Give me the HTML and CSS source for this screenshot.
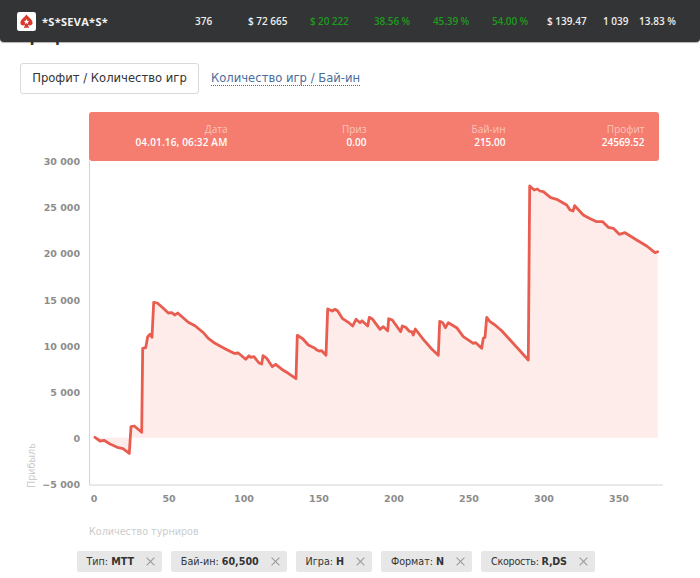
FILE: index.html
```html
<!DOCTYPE html>
<html lang="ru">
<head>
<meta charset="utf-8">
<title>График</title>
<link rel="stylesheet" href="styles.css">
</head>
<body>
<header class="topbar">
  <div class="player">
    <svg class="logo" viewBox="0 0 20 20" width="19" height="19" aria-hidden="true">
      <rect width="20" height="20" rx="2.5" fill="#fff"/>
      <path d="M10 2.6C8 5.6 3.6 7.6 3.6 11.6c0 2.4 2.9 3.4 4.9 1.9-.2 1.2-.8 2-1.5 3h6c-.7-1-1.3-1.8-1.5-3 2 1.5 4.9.5 4.9-1.9 0-4-4.4-6-6.400-9z" fill="#d93a2e"/>
      <path d="M10 7.400l.8 1.900 2 .2-1.500 1.300.5 2-1.800-1.100-1.800 1.100.5-2-1.500-1.300 2-.2z" fill="#fff"/>
    </svg>
    <span class="name">*S*SEVA*S*</span>
  </div>
  <span class="stat">376</span>
  <span class="stat">$ 72 665</span>
  <span class="stat good">$ 20 222</span>
  <span class="stat good">38.56 %</span>
  <span class="stat good">45.39 %</span>
  <span class="stat good">54.00 %</span>
  <span class="stat">$ 139.47</span>
  <span class="stat">1 039</span>
  <span class="stat">13.83 %</span>
</header>
<main>
  <h1 class="title">График</h1>
  <nav class="tabs">
    <button class="tab" type="button">Профит / Количество игр</button>
    <a class="tab-link" href="#">Количество игр / Бай-ин</a>
  </nav>
  <section class="chart">
    <div class="tip">
      <div class="tip-col"><span class="tip-label">Дата</span><strong class="tip-value">04.01.16, 06:32 AM</strong></div>
      <div class="tip-col"><span class="tip-label">Приз</span><strong class="tip-value">0.00</strong></div>
      <div class="tip-col"><span class="tip-label">Бай-ин</span><strong class="tip-value">215.00</strong></div>
      <div class="tip-col"><span class="tip-label">Профит</span><strong class="tip-value">24569.52</strong></div>
    </div>
    <svg class="plot" viewBox="0 100 700 440" width="700" height="440">
      <path class="area" d="M95 437.3L100 441 104 440.3 110 444 118.3 447.7 123 448.7 129.3 453.3 131 426.7 134.3 426 141.7 432.3 142.7 348.3 145.7 347.7 147.7 336.7 150 334.3 152 337.3 153.7 302.3 157.3 303 163.3 308.3 168.3 313 171.7 312.7 175 315 177.7 313 188.3 322.3 195 325.7 204 333.3 208.3 338.3 215 343.3 225 348.7 234 353.3 238.3 353 245.7 359.3 249 355.7 250.7 357.3 254 356.7 259 363 261.7 364 263 355.7 266.7 358.3 272.3 366.7 275.7 364.3 283.3 370.3 288.3 373.3 296 378.7 297.3 335.3 302.7 338.7 308.3 345 315 348.3 316.7 350 319.3 351 321.7 350.7 326 355.3 327.7 309 332.3 311 335 309.3 337.7 311 342.3 318.3 348.3 322.3 352.7 326 356 319.3 360 322.7 362 320.7 367.7 326 369.3 317.3 372.7 319.3 380 329.3 383.3 326.7 387.7 330.7 388.7 318.7 392.3 320 400.7 331.7 402.3 326 405.7 327.3 409.3 331.3 411.7 331.7 413.3 335 415.3 329 423.3 339.3 431.7 349 438.3 355.3 439.7 321.3 442.7 322.7 445.3 327.7 448.3 322.7 456.7 327.7 463.3 336.7 473.3 343.3 475.7 342.7 481.7 348.3 483.3 338.3 485 337.3 486.7 317.3 490 321.7 495 325 501.7 330.7 528.3 360 529.7 186 534.3 190 537.3 189 540 191 543.3 191.7 550.7 197.7 556.7 199.3 566.7 205 570 210 573 211 574.7 205.7 583.3 215 589.3 218.3 596.7 221.7 602.7 221.7 608.3 227.3 613.3 228.3 619.3 234.3 625 232.7 636.7 240 646.7 246 655 252.7 657.7 251.7V437.7H95Z"/>
      <path class="axis" d="M89.5 161V485H663"/>
      <path class="line" d="M95 437.3L100 441 104 440.3 110 444 118.3 447.7 123 448.7 129.3 453.3 131 426.7 134.3 426 141.7 432.3 142.7 348.3 145.7 347.7 147.7 336.7 150 334.3 152 337.3 153.7 302.3 157.3 303 163.3 308.3 168.3 313 171.7 312.7 175 315 177.7 313 188.3 322.3 195 325.7 204 333.3 208.3 338.3 215 343.3 225 348.7 234 353.3 238.3 353 245.7 359.3 249 355.7 250.7 357.3 254 356.7 259 363 261.7 364 263 355.7 266.7 358.3 272.3 366.7 275.7 364.3 283.3 370.3 288.3 373.3 296 378.7 297.3 335.3 302.7 338.7 308.3 345 315 348.3 316.7 350 319.3 351 321.7 350.7 326 355.3 327.7 309 332.3 311 335 309.3 337.7 311 342.3 318.3 348.3 322.3 352.7 326 356 319.3 360 322.7 362 320.7 367.7 326 369.3 317.3 372.7 319.3 380 329.3 383.3 326.7 387.7 330.7 388.7 318.7 392.3 320 400.7 331.7 402.3 326 405.7 327.3 409.3 331.3 411.7 331.7 413.3 335 415.3 329 423.3 339.3 431.7 349 438.3 355.3 439.7 321.3 442.7 322.7 445.3 327.7 448.3 322.7 456.7 327.7 463.3 336.7 473.3 343.3 475.7 342.7 481.7 348.3 483.3 338.3 485 337.3 486.7 317.3 490 321.7 495 325 501.7 330.7 528.3 360 529.7 186 534.3 190 537.3 189 540 191 543.3 191.7 550.7 197.7 556.7 199.3 566.7 205 570 210 573 211 574.7 205.7 583.3 215 589.3 218.3 596.7 221.7 602.7 221.7 608.3 227.3 613.3 228.3 619.3 234.3 625 232.7 636.7 240 646.7 246 655 252.7 657.7 251.7"/>
      <g class="ticks-y">
        <text x="80" y="165">30 000</text>
        <text x="80" y="211">25 000</text>
        <text x="80" y="257">20 000</text>
        <text x="80" y="304">15 000</text>
        <text x="80" y="350">10 000</text>
        <text x="80" y="396">5 000</text>
        <text x="80" y="442">0</text>
        <text x="80" y="488">−5 000</text>
      </g>
      <g class="ticks-x">
        <text x="94" y="502">0</text>
        <text x="169" y="502">50</text>
        <text x="244" y="502">100</text>
        <text x="319" y="502">150</text>
        <text x="394" y="502">200</text>
        <text x="469" y="502">250</text>
        <text x="544" y="502">300</text>
        <text x="619" y="502">350</text>
      </g>
      <text class="axis-title" transform="translate(35 488) rotate(-90)">Прибыль</text>
      <text class="axis-title" x="89" y="535">Количество турниров</text>
    </svg>
  </section>
  <ul class="chips">
    <li class="chip">Тип: <b>MTT</b><i class="x"></i></li>
    <li class="chip">Бай-ин: <b>60,500</b><i class="x"></i></li>
    <li class="chip">Игра: <b>H</b><i class="x"></i></li>
    <li class="chip">Формат: <b>N</b><i class="x"></i></li>
    <li class="chip">Скорость: <b>R,DS</b><i class="x"></i></li>
  </ul>
</main>
</body>
</html>
```
FILE: styles.css
```css
* { box-sizing: border-box; }
html, body { margin: 0; padding: 0; background: #fff; }
body { width: 700px; height: 578px; overflow: hidden; position: relative; font-family: "DejaVu Sans", sans-serif; color: #333; }

.topbar {
  position: absolute; left: 0; top: 0; z-index: 5; width: 700px; height: 42px;
  background: #333435; border-radius: 0 0 4px 4px; box-shadow: 0 1px 1px rgba(0,0,0,.3);
  display: grid; align-items: center;
  grid-template-columns: 195px 53px 62px 64px 59px 59px 55px 56px 36px 61px;
  font: 600 10px "Open Sans", sans-serif; color: #eee;
}
.player { display: flex; align-items: center; padding-left: 17px; gap: 6px; }
.logo { flex: none; }
.name { font-weight: 700; font-size: 11px; color: #f2f2f2; letter-spacing: .3px; }
.stat { white-space: nowrap; }
.good { color: #1e9a1e; letter-spacing: -.1px; }

.title { margin: 0; padding: 23px 0 0 20px; height: 62px; font: 700 17px/24px "Open Sans", sans-serif; color: #333; }
.tabs { display: flex; align-items: center; padding-left: 20px; gap: 12px; height: 32px; }
.tab {
  width: 179px; height: 31px; padding: 0; background: #fff; border: 1px solid #d9d9d9; border-radius: 3px;
  font: 400 11.6px "DejaVu Sans", sans-serif; color: #333;
}
.tab-link { font-size: 11.6px; color: #4a6d9c; text-decoration: none; border-bottom: 1px dotted #4a6d9c; line-height: 14px; }

.chart { position: relative; height: 440px; margin-top: 6px; }
.plot { display: block; }
.area { fill: #fdece9; }
.line { fill: none; stroke: #e95d51; stroke-width: 2.8; stroke-linejoin: round; stroke-linecap: round; }
.axis { fill: none; stroke: #d4d4d8; stroke-width: 1; }
.ticks-y text, .ticks-x text { font: 700 9.5px "DejaVu Sans", sans-serif; fill: #8c8c8c; }
.ticks-y text { text-anchor: end; }
.ticks-x text { text-anchor: middle; }
.axis-title { font: 400 9.6px "DejaVu Sans", sans-serif; fill: #ccc; }

.tip {
  position: absolute; left: 89px; top: 12px; z-index: 2; width: 570px; height: 49px;
  background: #f57d70; border-radius: 3px; display: grid; grid-template-columns: 138.5px repeat(3, 139px);
  padding-top: 11px; font-family: "Open Sans", sans-serif; font-size: 10px;
}
.tip-col { display: flex; flex-direction: column; align-items: flex-end; line-height: 13px; }
.tip-label { color: #fbc4bd; }
.tip-value { color: #fff; font-weight: 600; }
.tip-col:first-child .tip-value { letter-spacing: .16px; }

.chips { list-style: none; margin: 11px 0 0; padding: 0 0 0 77px; display: flex; gap: 9.3px; }
.chip {
  display: flex; align-items: center; height: 21px; padding: 0 7px 0 9.500px; background: #e7e7e7; border-radius: 2px;
  font-size: 9.6px; color: #333; white-space: pre;
}
.chip:last-child { letter-spacing: -.25px; }
.chip b { font-weight: 700; }
.x { position: relative; width: 9px; height: 9px; margin-left: 12px; }
.x::before, .x::after { content: ""; position: absolute; left: 4px; top: -1px; width: 1px; height: 11px; background: #999; transform: rotate(45deg); }
.x::after { transform: rotate(-45deg); }
```
